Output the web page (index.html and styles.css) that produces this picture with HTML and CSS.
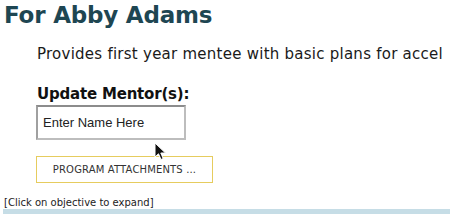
FILE: index.html
```html
<!DOCTYPE html>
<html>
<head>
<meta charset="utf-8">
<link rel="stylesheet" href="styles.css">
</head>
<body>
<div class="page">
  <h1 class="title">For Abby Adams</h1>
  <div class="indent">
    <p class="desc">Provides first year mentee with basic plans for accel</p>
    <div class="label">Update Mentor(s):</div>
    <div class="input">Enter Name Here</div>
    <div class="btn">PROGRAM ATTACHMENTS ...</div>
  </div>
  <div class="hint">[Click on objective to expand]</div>
  <div class="bar"></div>
</div>
<svg class="cursor" width="13" height="20" viewBox="0 0 13 20"><path d="M1 1 L1 15 L4.5 11.8 L7 17.5 L9.2 16.5 L6.8 11 L11.5 11 Z" fill="#111" stroke="#fff" stroke-width="1"/></svg>
</body>
</html>
```
FILE: styles.css
```css
html, body { margin: 0; padding: 0; background: #fff; overflow: hidden; }
body { width: 450px; height: 214px; position: relative; }
.page { padding: 0 0 0 4px; font-family: "DejaVu Sans", sans-serif; color: #222; }
.title { margin: 0; padding-top: 2px; font-size: 23px; line-height: 26px; font-weight: bold; letter-spacing: -0.2px; color: #1e4652; }
.indent { padding-left: 33px; }
.desc { margin: 16px 0 0 0; font-size: 15px; line-height: 20px; white-space: nowrap; letter-spacing: 0.25px; color: #1a1a1a; }
.label { margin-top: 21px; font-size: 15px; font-weight: bold; line-height: 18px; letter-spacing: -0.2px; color: #111; }
.input { margin-top: 2px; margin-left: -1px; width: 141px; height: 31px; border: 2px solid #bdbdbd; border-top-color: #8c8c8c; border-left-color: #a0a0a0; font-family: "Liberation Sans", Arial, sans-serif; font-size: 13px; line-height: 31px; padding-left: 5px; color: #222; }
.btn { margin-top: 16px; margin-left: -1px; width: 175px; height: 25px; border: 1px solid #e6cc5e; font-size: 10px; line-height: 25px; letter-spacing: 0.15px; text-align: center; color: #333; }
.hint { margin-top: 14px; font-size: 10px; line-height: 12px; color: #222; }
.bar { margin-top: 0; height: 6px; margin-left: -1px; background: #c6dde6; }
.cursor { position: absolute; left: 154px; top: 142px; }
```
